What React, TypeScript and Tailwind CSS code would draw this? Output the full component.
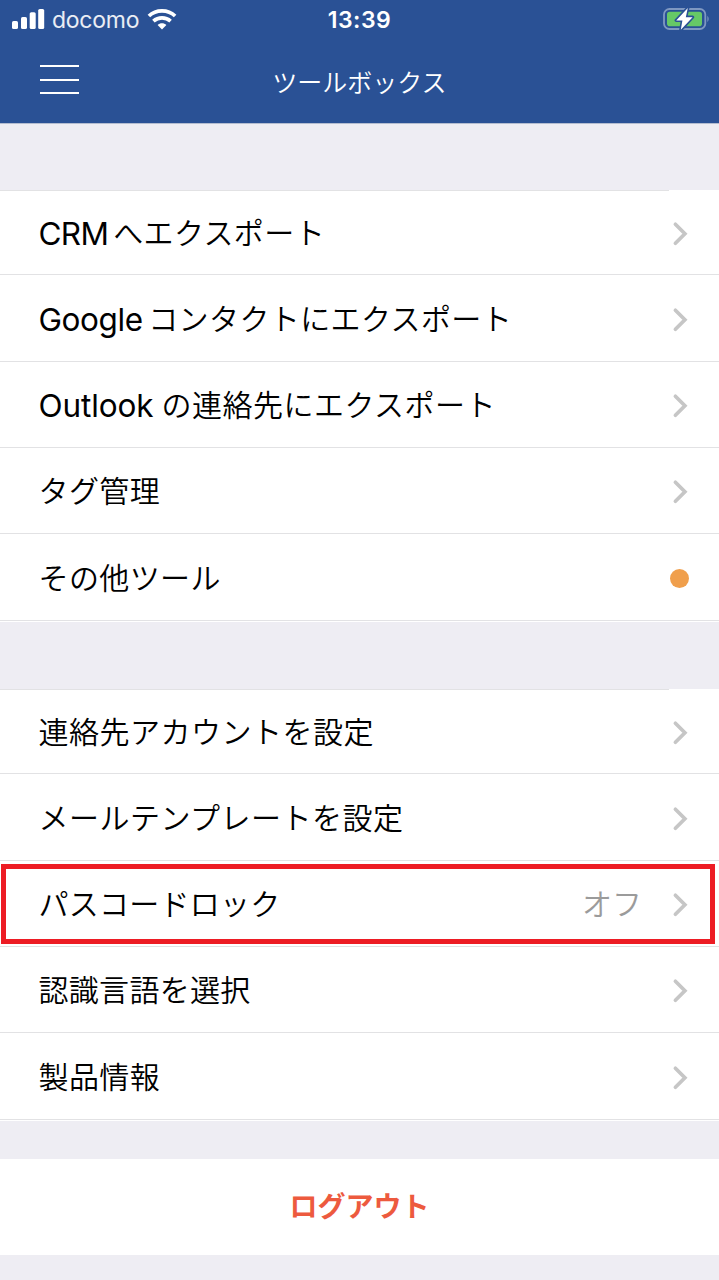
import React from "react";

type Item = {
  latin?: string;
  latinClass?: string;
  label: string;
  labelClass: string;
  height: string;
  value?: string;
  dot?: boolean;
  highlight?: boolean;
};

const exportItems: Item[] = [
  { latin: "CRM", latinClass: "tracking-[-0.7px] mr-[5px]", label: "へエクスポート", labelClass: "tracking-[0.4px]", height: "h-[85px]" },
  { latin: "Google", latinClass: "tracking-[-0.4px] mr-[5.5px]", label: "コンタクトにエクスポート", labelClass: "tracking-[0.4px]", height: "h-[87px]" },
  { latin: "Outlook", latinClass: "tracking-[-0.1px] mr-[8px]", label: "の連絡先にエクスポート", labelClass: "tracking-[0.5px]", height: "h-[86px]" },
  { label: "タグ管理", labelClass: "tracking-[0.4px]", height: "h-[86px]" },
  { label: "その他ツール", labelClass: "tracking-[0.4px]", height: "h-[87px]", dot: true },
];

const settingItems: Item[] = [
  { label: "連絡先アカウントを設定", labelClass: "tracking-[0.5px]", height: "h-[85px]" },
  { label: "メールテンプレートを設定", labelClass: "tracking-[0.5px]", height: "h-[87px]" },
  { label: "パスコードロック", labelClass: "tracking-[0.25px]", height: "h-[86px]", value: "オフ", highlight: true },
  { label: "認識言語を選択", labelClass: "tracking-[0.3px]", height: "h-[86px]" },
  { label: "製品情報", labelClass: "tracking-[0.4px]", height: "h-[87px]" },
];

function Chevron() {
  return (
    <svg width="16" height="26" viewBox="0 0 16 26" fill="none" stroke="#c6c6c6" strokeWidth="3.7" strokeLinecap="round" strokeLinejoin="miter">
      <path d="M3.4 3.2 L12.9 12.7 L3.4 22.2" />
    </svg>
  );
}

function Row({ item }: { item: Item }) {
  return (
    <li className={`relative flex items-center border-b border-[#e2e2e4] pt-[3px] pl-[38.5px] pr-[31px] ${item.height}`}>
      <span className="flex flex-1 items-baseline whitespace-nowrap text-[30px] leading-[40px] text-black">
        {item.latin && <span className={`text-[31.5px] ${item.latinClass}`}>{item.latin}</span>}
        <span className={`-translate-y-px font-[350] ${item.labelClass}`}>{item.label}</span>
      </span>
      {item.value && <span className="mr-[30px] -translate-y-px text-[30px] leading-[40px] font-[350] text-[#9b9b9b]">{item.value}</span>}
      {item.dot ? <span className="-mr-px size-[19px] rounded-full bg-[#f09f4c]" /> : <Chevron />}
      {item.highlight && <span className="pointer-events-none absolute top-[3px] left-px h-[80px] w-[714px] border-[5px] border-[#ed1c24]" />}
    </li>
  );
}

function Group({ items }: { items: Item[] }) {
  return (
    <ul className="relative bg-white pb-px">
      <li aria-hidden="true" className="absolute top-0 left-0 h-px w-[669px] bg-[#e2e2e4]" />
      {items.map((item) => (
        <Row key={item.label} item={item} />
      ))}
    </ul>
  );
}

function StatusBar() {
  return (
    <div className="grid h-[40px] grid-cols-3 items-center">
      <div className="flex items-center pl-[12px]">
        <svg className="mb-[2px]" width="33" height="20" viewBox="0 0 33 20" fill="#fff">
          <rect x="0" y="12" width="6" height="8" rx="1.6" />
          <rect x="9" y="8" width="6" height="12" rx="1.6" />
          <rect x="17.7" y="3.2" width="6" height="16.8" rx="1.6" />
          <rect x="26.2" y="0" width="6" height="20" rx="1.6" />
        </svg>
        <span className="ml-[7px] text-[23px] leading-[28px] tracking-[-0.25px] text-white/90">docomo</span>
        <svg className="mb-[2px] ml-[8px]" width="30" height="22" viewBox="0 0 30 22" fill="none" stroke="#fff" strokeWidth="3.7">
          <path d="M1.9 8 C9 1.2 21 1.2 28.1 8" />
          <path d="M6.4 13.2 C11.3 8.8 18.7 8.8 23.6 13.2" />
          <path d="M15 21.4 L10.6 17 C13 14.6 17 14.6 19.4 17 Z" fill="#fff" stroke="none" />
        </svg>
      </div>
      <span className="text-center text-[23px] leading-[28px] font-semibold tracking-[0.5px] text-white">13:39</span>
      <div className="flex justify-end pr-[10px] pb-[2px]">
        <svg width="47" height="24" viewBox="0 0 47 24">
          <rect x="2" y="2" width="41.3" height="20" rx="5.5" fill="none" stroke="#7f98c1" strokeWidth="1.8" />
          <path d="M45.4 8.8 Q48 12 45.4 15.2 Z" fill="#7f98c1" />
          <rect x="5" y="4.8" width="35" height="14.4" rx="2.8" fill="#66c866" />
          <path d="M25.8 1 L14.2 13.4 H20.4 L18.8 22.8 L30.6 10.2 H23.8 Z" fill="#fff" stroke="#2a5195" strokeWidth="3.2" strokeLinejoin="round" paintOrder="stroke" />
        </svg>
      </div>
    </div>
  );
}

export default function App() {
  return (
    <div className="h-[1280px] w-[719px] overflow-hidden bg-[#eeedf3] font-['Inter','Noto_Sans_CJK_JP',sans-serif]" lang="ja">
      <header className="h-[123px] bg-[#2a5195]">
        <StatusBar />
        <div className="grid h-[83px] grid-cols-3 items-center">
          <button aria-label="メニュー" className="mb-[4px] ml-[40px] flex h-[29px] w-[39px] flex-col justify-between">
            <span className="h-[2px] w-full bg-white" />
            <span className="h-[2px] w-full bg-white" />
            <span className="h-[2px] w-full bg-white" />
          </button>
          <h1 className="pt-[2px] text-center text-[25px] leading-[36px] font-[350] whitespace-nowrap text-white">ツールボックス</h1>
        </div>
      </header>
      <main>
        <div className="h-[67px] border-t border-[#b4bdd0]" />
        <Group items={exportItems} />
        <div className="h-[67px]" />
        <Group items={settingItems} />
        <div className="h-[38px]" />
        <button className="flex h-[96px] w-full items-center justify-center bg-white text-[28px] leading-[40px] font-bold text-[#ed5a3e]">ログアウト</button>
      </main>
    </div>
  );
}
